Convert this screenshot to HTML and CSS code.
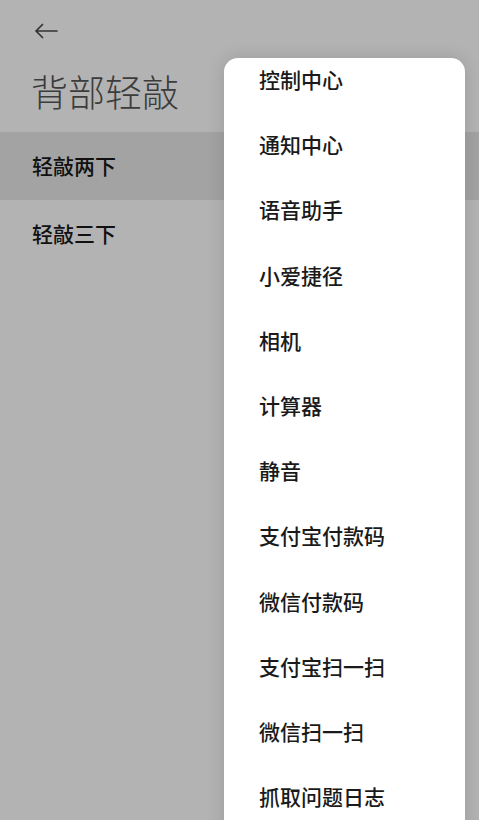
FILE: index.html
```html
<!DOCTYPE html>
<html lang="zh-CN">
<head>
<meta charset="utf-8">
<title>背部轻敲</title>
<link rel="stylesheet" href="styles.css">
</head>
<body>
<div class="page">
  <header class="top">
    <div class="back">
      <svg width="24" height="16" viewBox="0 0 24 16" aria-hidden="true">
        <path d="M23 8H2M8.5 1.5L2 8l6.5 6.5" fill="none" stroke="#333" stroke-width="1.7" stroke-linecap="round" stroke-linejoin="round"/>
      </svg>
    </div>
    <h1 class="title">背部轻敲</h1>
  </header>
  <ul class="rows">
    <li class="row active">轻敲两下</li>
    <li class="row">轻敲三下</li>
  </ul>
</div>
<div class="menu">
  <ul class="menu-list">
    <li class="menu-item">控制中心</li>
    <li class="menu-item">通知中心</li>
    <li class="menu-item">语音助手</li>
    <li class="menu-item">小爱捷径</li>
    <li class="menu-item">相机</li>
    <li class="menu-item">计算器</li>
    <li class="menu-item">静音</li>
    <li class="menu-item">支付宝付款码</li>
    <li class="menu-item">微信付款码</li>
    <li class="menu-item">支付宝扫一扫</li>
    <li class="menu-item">微信扫一扫</li>
    <li class="menu-item">抓取问题日志</li>
  </ul>
</div>
</body>
</html>
```

FILE: styles.css
```css
* { box-sizing: border-box; }
html, body {
  margin: 0;
  padding: 0;
  width: 479px;
  height: 820px;
  overflow: hidden;
  background: #b3b3b3;
  font-family: "Noto Sans CJK SC", "Noto Sans", sans-serif;
}
.page {
  display: flex;
  flex-direction: column;
}
.top {
  padding: 0 0 0 34px;
}
.back {
  height: 60px;
  display: flex;
  align-items: center;
  padding-top: 2px;
}
.back svg { display: block; }
.title {
  margin: 0 0 0 -3px;
  height: 72px;
  display: flex;
  align-items: center;
  padding-bottom: 10px;
  font-size: 37px;
  font-weight: 300;
  color: #3c3c3c;
}
.rows {
  list-style: none;
  margin: 0;
  padding: 0;
}
.row {
  height: 68px;
  display: flex;
  align-items: center;
  padding-left: 32px;
  padding-bottom: 3px;
  font-size: 21px;
  font-weight: 500;
  color: #111111;
}
.row.active {
  background: #a3a3a3;
}
.menu {
  position: absolute;
  left: 224px;
  top: 58px;
  width: 241px;
  height: 800px;
  background: #ffffff;
  border-radius: 14px;
  overflow: hidden;
  box-shadow: 0 0 18px rgba(0, 0, 0, 0.14);
}
.menu-list {
  list-style: none;
  margin: -11.6px 0 0 0;
  padding: 0;
}
.menu-item {
  height: 65.2px;
  display: flex;
  align-items: center;
  padding-left: 35px;
  font-size: 21px;
  font-weight: 500;
  color: #1a1a1a;
}
```
